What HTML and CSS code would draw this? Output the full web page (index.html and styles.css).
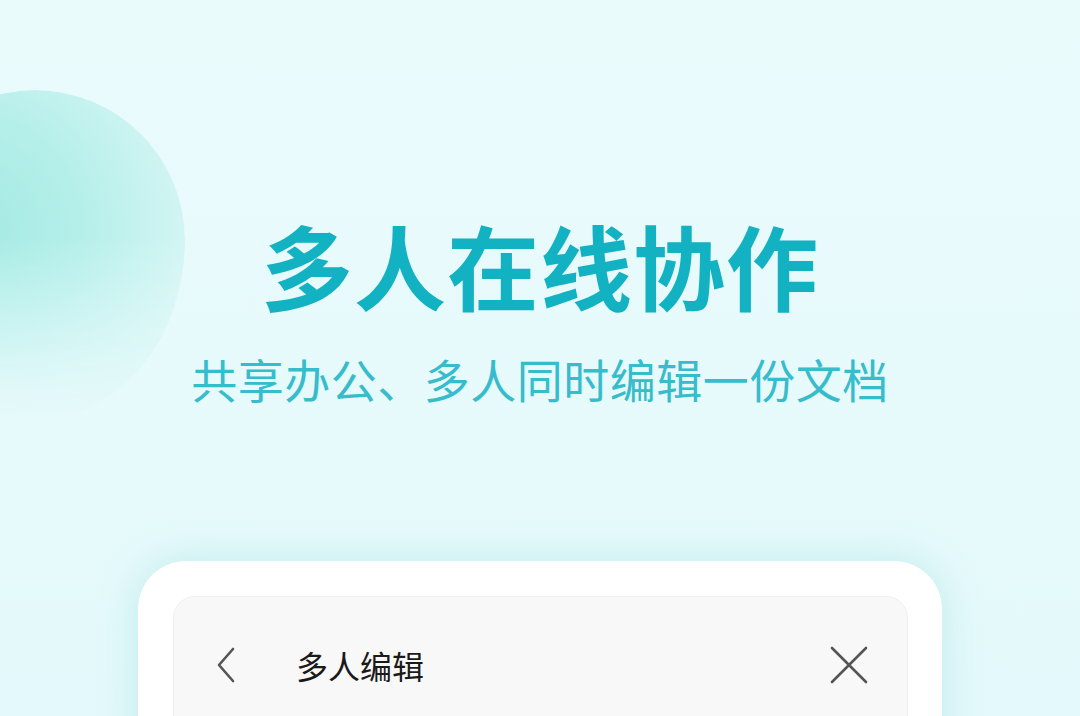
FILE: index.html
```html
<!DOCTYPE html>
<html lang="zh-CN">
<head>
<meta charset="utf-8">
<link rel="stylesheet" href="styles.css">
</head>
<body>
<div class="page">
  <div class="blob"></div>
  <header class="hero">
    <h1 class="title">多人在线协作</h1>
    <p class="subtitle">共享办公、多人同时编辑一份文档</p>
  </header>
  <div class="phone">
    <div class="panel">
      <div class="bar">
        <svg class="back" viewBox="0 0 24 40" width="24" height="40"><path d="M19 4 L5 20 L19 36" fill="none" stroke="#555" stroke-width="2.6" stroke-linecap="round" stroke-linejoin="round"/></svg>
        <span class="bar-title">多人编辑</span>
        <svg class="close" viewBox="0 0 40 40" width="40" height="40"><path d="M3 3 L37 37 M37 3 L3 37" fill="none" stroke="#555" stroke-width="2.6" stroke-linecap="round"/></svg>
      </div>
    </div>
  </div>
</div>
</body>
</html>
```
FILE: styles.css
```css
html, body {
  margin: 0;
  padding: 0;
}
body {
  width: 1080px;
  height: 716px;
  overflow: hidden;
  background: #e5f9fb;
  font-family: "Noto Sans CJK SC", "Noto Sans", sans-serif;
}
.page {
  position: relative;
  width: 1080px;
  height: 716px;
  overflow: hidden;
  background: linear-gradient(180deg, #eafbfc 0%, #e4f9fb 100%);
}
.blob {
  position: absolute;
  left: -115px;
  top: 90px;
  width: 300px;
  height: 330px;
  border-radius: 150px 150px 150px 150px / 150px 150px 180px 180px;
  background: radial-gradient(circle at 28% 42%, #a3eae2 0%, #b6efea 40%, #d2f5f3 75%, #e0f8f8 100%);
  -webkit-mask-image: linear-gradient(180deg, #000 45%, rgba(0,0,0,0.5) 75%, transparent 100%);
  mask-image: linear-gradient(180deg, #000 45%, rgba(0,0,0,0.5) 75%, transparent 100%);
}
.hero {
  position: relative;
  padding-top: 203px;
  text-align: center;
}
.title {
  margin: 0;
  font-size: 92px;
  line-height: 122px;
  font-weight: 700;
  color: #13b2c3;
  letter-spacing: 1px;
}
.subtitle {
  margin: 23px 0 0;
  font-size: 46px;
  line-height: 60px;
  font-weight: 400;
  color: #36bccb;
  letter-spacing: 0.5px;
}
.phone {
  position: relative;
  margin: 153px auto 0;
  width: 804px;
  height: 300px;
  box-sizing: border-box;
  padding: 35px 34px 0 35px;
  background: #ffffff;
  border-radius: 48px;
  box-shadow: 0 0 40px rgba(150, 220, 220, 0.45);
}
.panel {
  height: 260px;
  background: #f8f8f8;
  border: 1px solid #efefef;
  border-radius: 22px;
}
.bar {
  display: flex;
  align-items: center;
  height: 136px;
  padding: 0 38px 0 40px;
}
.back {
  flex: none;
}
.bar-title {
  margin-left: 58px;
  font-size: 32px;
  color: #1a1a1a;
  flex: 1;
}
.close {
  flex: none;
}
```
